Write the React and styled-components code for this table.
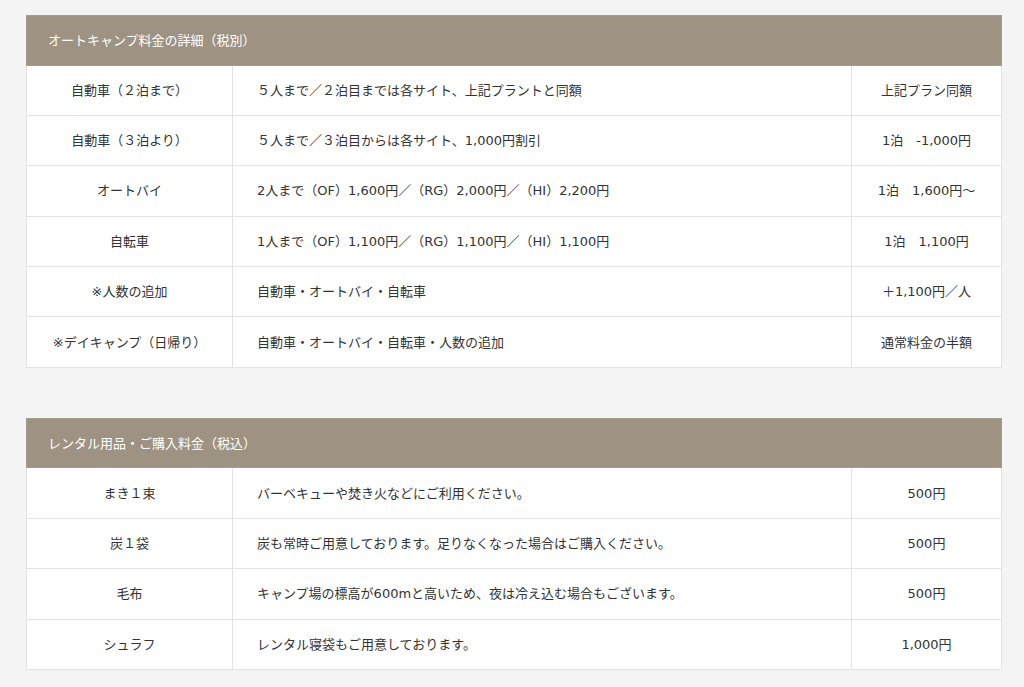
import React from "react";
import styled, { createGlobalStyle } from "styled-components";

const GlobalStyle = createGlobalStyle`
    html, body {
        margin: 0;
        padding: 0;
        background-color: #f4f4f4;
    }
    body {
        font-family: "DejaVu Sans", "Noto Sans CJK JP", sans-serif;
        color: #333;
    }
`;

const Page = styled.div`
    padding: 15px 23px 18px 26px;
    display: flex;
    flex-direction: column;
    gap: 50px;
`;

const Table = styled.table`
    width: 975px;
    border-collapse: collapse;
    table-layout: fixed;
    background-color: #fff;
    font-size: 13px;
`;

const HeadCell = styled.th`
    background-color: #9e9282;
    color: #fff;
    font-weight: normal;
    text-align: left;
    height: 49.5px;
    padding: 0 0 1px 21px;
    box-sizing: border-box;
    border: 1px solid #a69b8c;
    font-family: "Noto Sans CJK JP", sans-serif;
    font-size: 13px;
`;

const Cell = styled.td`
    height: 50.4px;
    box-sizing: border-box;
    border: 1px solid #e3e3e3;
    padding: 0 0 2px;
    padding-left: ${(p) => (p.$align === "left" ? "24px" : "0")};
    text-align: ${(p) => p.$align || "center"};
    white-space: nowrap;
`;

const autoCamp = [
    ["自動車（２泊まで）", "５人まで／２泊目までは各サイト、上記プラントと同額", "上記プラン同額"],
    ["自動車（３泊より）", "５人まで／３泊目からは各サイト、1,000円割引", "1泊　-1,000円"],
    ["オートバイ", "2人まで（OF）1,600円／（RG）2,000円／（HI）2,200円", "1泊　1,600円～"],
    ["自転車", "1人まで（OF）1,100円／（RG）1,100円／（HI）1,100円", "1泊　1,100円"],
    ["※人数の追加", "自動車・オートバイ・自転車", "＋1,100円／人"],
    ["※デイキャンプ（日帰り）", "自動車・オートバイ・自転車・人数の追加", "通常料金の半額"],
];

const rental = [
    ["まき１束", "バーベキューや焚き火などにご利用ください。", "500円"],
    ["炭１袋", "炭も常時ご用意しております。足りなくなった場合はご購入ください。", "500円"],
    ["毛布", "キャンプ場の標高が600mと高いため、夜は冷え込む場合もございます。", "500円"],
    ["シュラフ", "レンタル寝袋もご用意しております。", "1,000円"],
];

function PriceTable({ title, rows }) {
    return (
        <Table>
            <colgroup>
                <col style={{ width: "206px" }} />
                <col style={{ width: "619px" }} />
                <col style={{ width: "150px" }} />
            </colgroup>
            <thead>
                <tr>
                    <HeadCell colSpan={3}>{title}</HeadCell>
                </tr>
            </thead>
            <tbody>
                {rows.map((r) => (
                    <tr key={r[0]}>
                        <Cell>{r[0]}</Cell>
                        <Cell $align="left">{r[1]}</Cell>
                        <Cell>{r[2]}</Cell>
                    </tr>
                ))}
            </tbody>
        </Table>
    );
}

export default function App() {
    return (
        <>
            <GlobalStyle />
            <Page>
                <PriceTable title="オートキャンプ料金の詳細（税別）" rows={autoCamp} />
                <PriceTable title="レンタル用品・ご購入料金（税込）" rows={rental} />
            </Page>
        </>
    );
}
